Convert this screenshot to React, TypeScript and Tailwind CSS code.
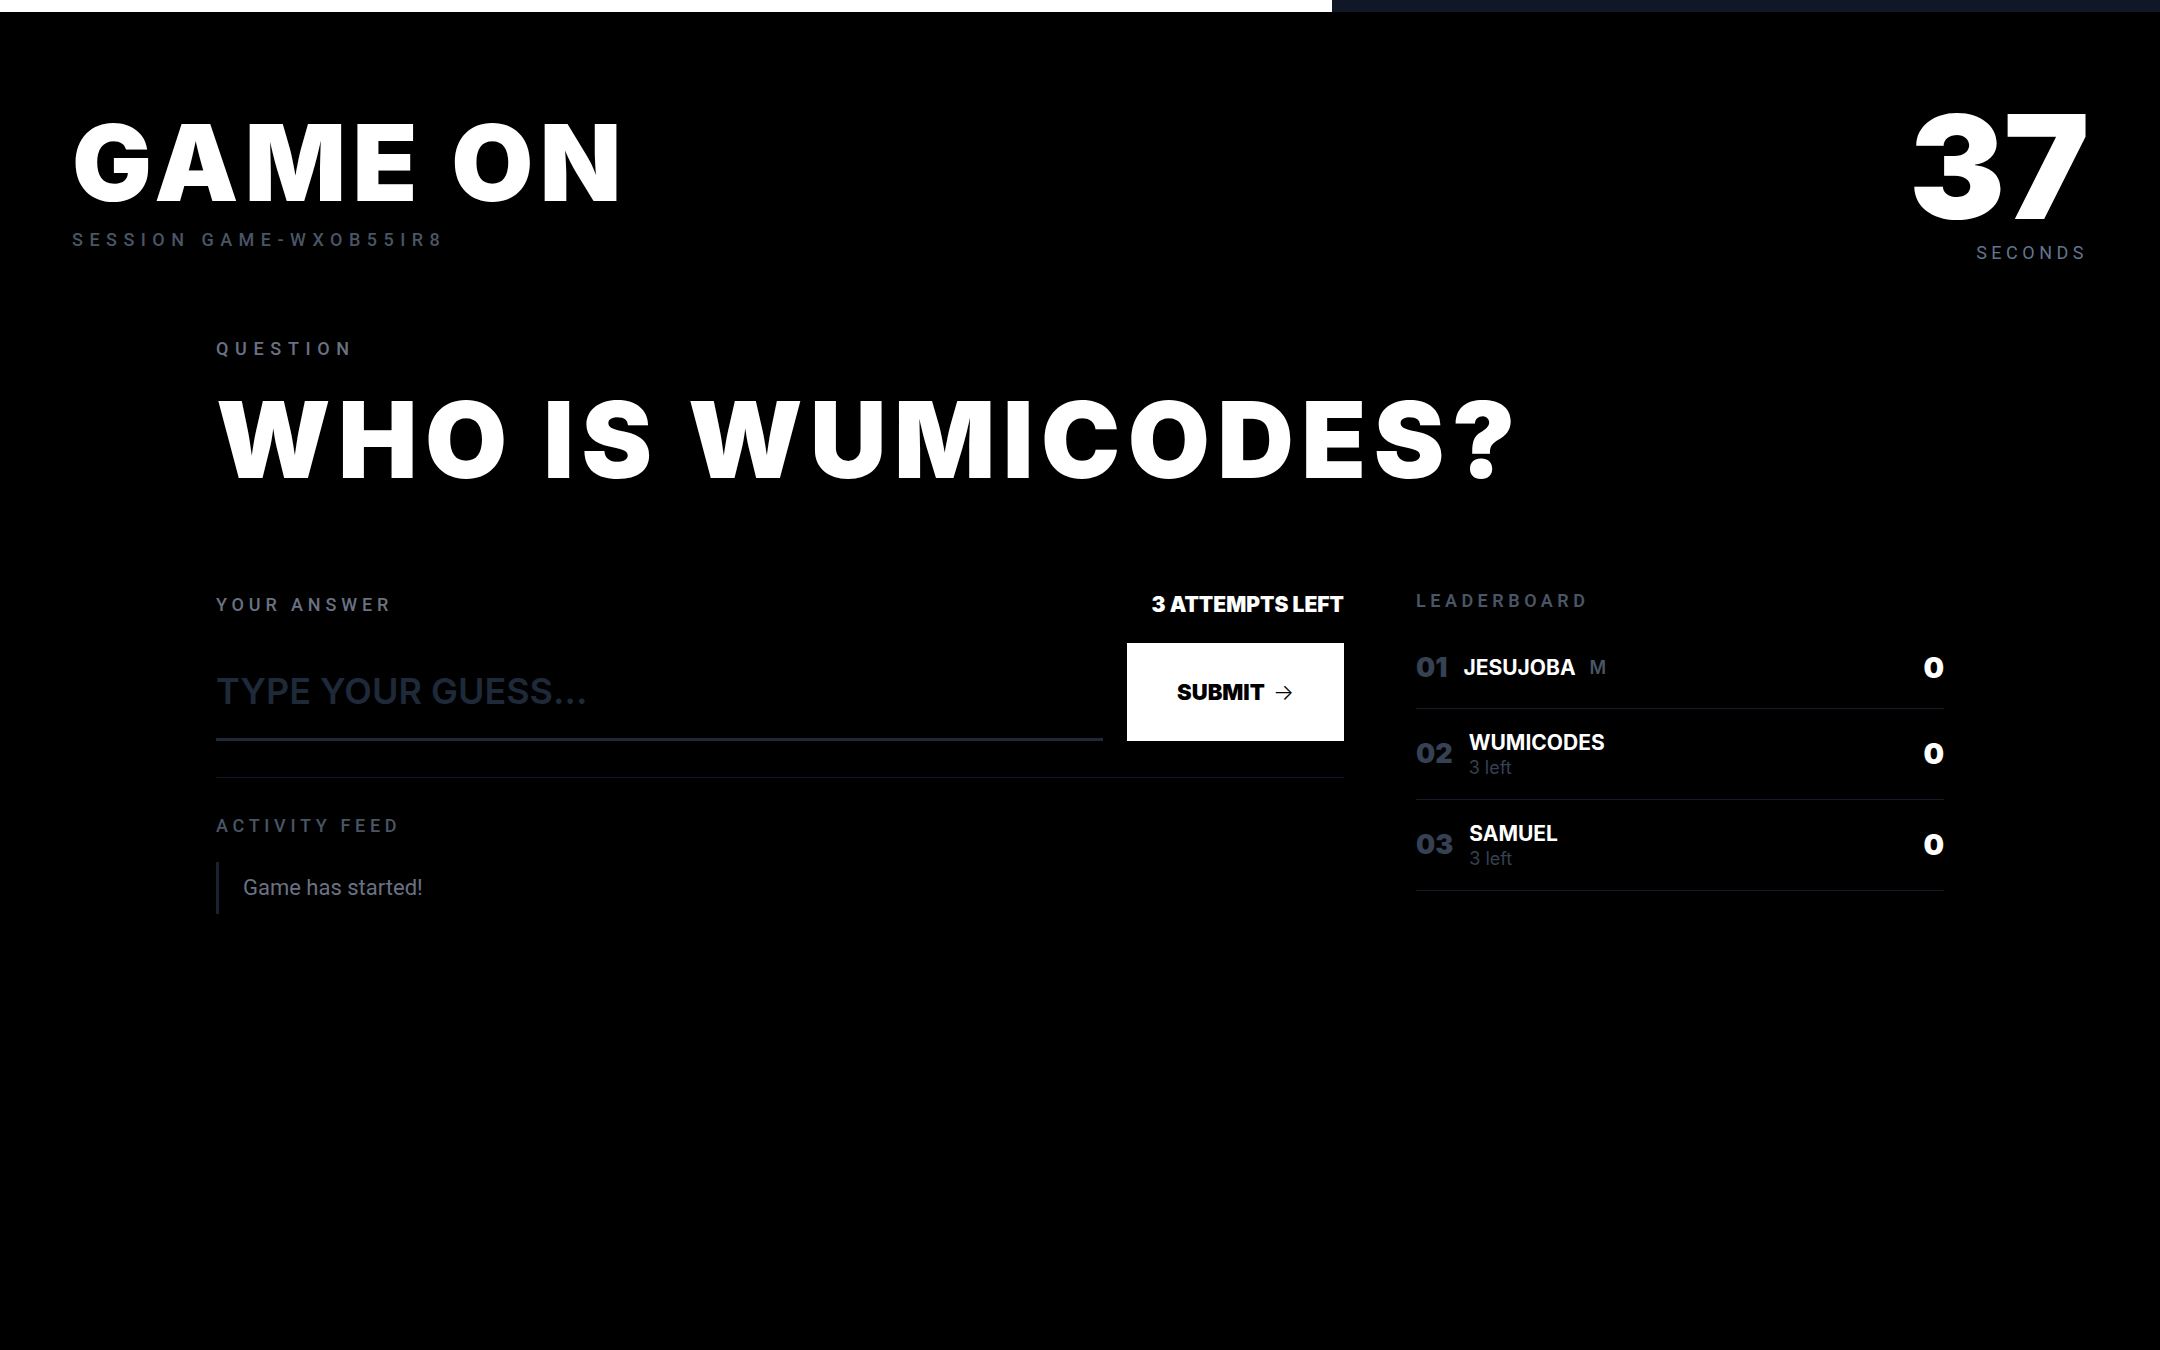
const players = [
  { rank: "01", name: "JESUJOBA", tag: "M", sub: "", score: 0 },
  { rank: "02", name: "WUMICODES", tag: "", sub: "3 left", score: 0 },
  { rank: "03", name: "SAMUEL", tag: "", sub: "3 left", score: 0 },
];

const heading = { fontFamily: "Inter, 'Noto Sans', sans-serif" };
const label = { fontFamily: "Roboto, 'Liberation Sans', sans-serif" };

export default function App() {
  const timeLeft = 37;
  return (
    <div className="min-h-screen bg-black text-white" style={heading}>
      <div className="h-3 bg-gray-900">
        <div className="h-full bg-white" style={{ width: `${(timeLeft / 60) * 100}%` }} />
      </div>

      <header className="flex items-start justify-between px-[72px] pt-[83px]">
        <div className="mt-[15px]">
          <h1 className="text-[106px] font-black leading-none tracking-[0.06em]">GAME ON</h1>
          <p className="mt-[10px] text-lg font-medium leading-7 tracking-[0.36em] text-gray-600" style={label}>
            SESSION GAME-WXOB55IR8
          </p>
        </div>
        <div className="flex flex-col items-end">
          <div className="text-[144px] font-black leading-none tracking-[-0.01em]">{timeLeft}</div>
          <div className="text-lg leading-7 tracking-[0.25em] text-slate-500" style={label}>
            SECONDS
          </div>
        </div>
      </header>

      <main className="mx-auto mt-[68px] max-w-[1728px]">
        <p className="text-lg font-medium leading-7 tracking-[0.37em] text-gray-500" style={label}>
          QUESTION
        </p>
        <h2 className="mt-6 text-[106px] font-black leading-none tracking-[0.07em]">WHO IS WUMICODES?</h2>

        <div className="mt-[94px] grid grid-cols-3 gap-x-[72px]">
          <section className="col-span-2">
            <div className="border-b border-[#111827] pb-9">
              <div className="flex items-center justify-between pt-1">
                <span className="text-lg font-medium leading-7 tracking-[0.27em] text-gray-500" style={label}>
                  YOUR ANSWER
                </span>
                <span className="text-[21px] font-black leading-7">3 ATTEMPTS LEFT</span>
              </div>
              <div className="mt-6 flex items-end gap-6">
                <input
                  placeholder="TYPE YOUR GUESS..."
                  className="h-[98px] flex-1 border-b-[3px] border-[#1f2937] bg-transparent text-4xl font-semibold text-white outline-none placeholder:text-gray-800"
                />
                <button className="flex h-[98px] w-[217px] items-center justify-center gap-2 bg-white text-[22px] font-black text-black">
                  SUBMIT <span className="font-light">→</span>
                </button>
              </div>
            </div>

            <div className="pt-[34px]">
              <p className="text-lg font-medium leading-7 tracking-[0.26em] text-gray-600" style={label}>
                ACTIVITY FEED
              </p>
              <ul className="mt-[22px]">
                <li className="border-l-[3px] border-[#1a2130] py-[10px] pl-6 text-[22px] leading-8 text-gray-500" style={label}>
                  Game has started!
                </li>
              </ul>
            </div>
          </section>

          <aside>
            <p className="text-lg font-semibold leading-7 tracking-[0.25em] text-gray-600" style={label}>
              LEADERBOARD
            </p>
            <ul className="mt-[13px]">
              {players.map((p) => (
                <li key={p.rank} className="flex items-center justify-between border-b border-[#141b29] py-5">
                  <div className="flex items-center gap-4">
                    <span className="text-[27px] font-black leading-10 text-gray-700">{p.rank}</span>
                    <div>
                      <div className="flex items-center">
                        <span className="text-[21px] font-bold leading-7">{p.name}</span>
                        {p.tag && <span className="ml-[14px] text-lg font-semibold text-gray-600">{p.tag}</span>}
                      </div>
                      {p.sub && <div className="text-lg leading-[22px] text-gray-700">{p.sub}</div>}
                    </div>
                  </div>
                  <span className="text-[29px] font-black leading-10">{p.score}</span>
                </li>
              ))}
            </ul>
          </aside>
        </div>
      </main>
    </div>
  );
}
